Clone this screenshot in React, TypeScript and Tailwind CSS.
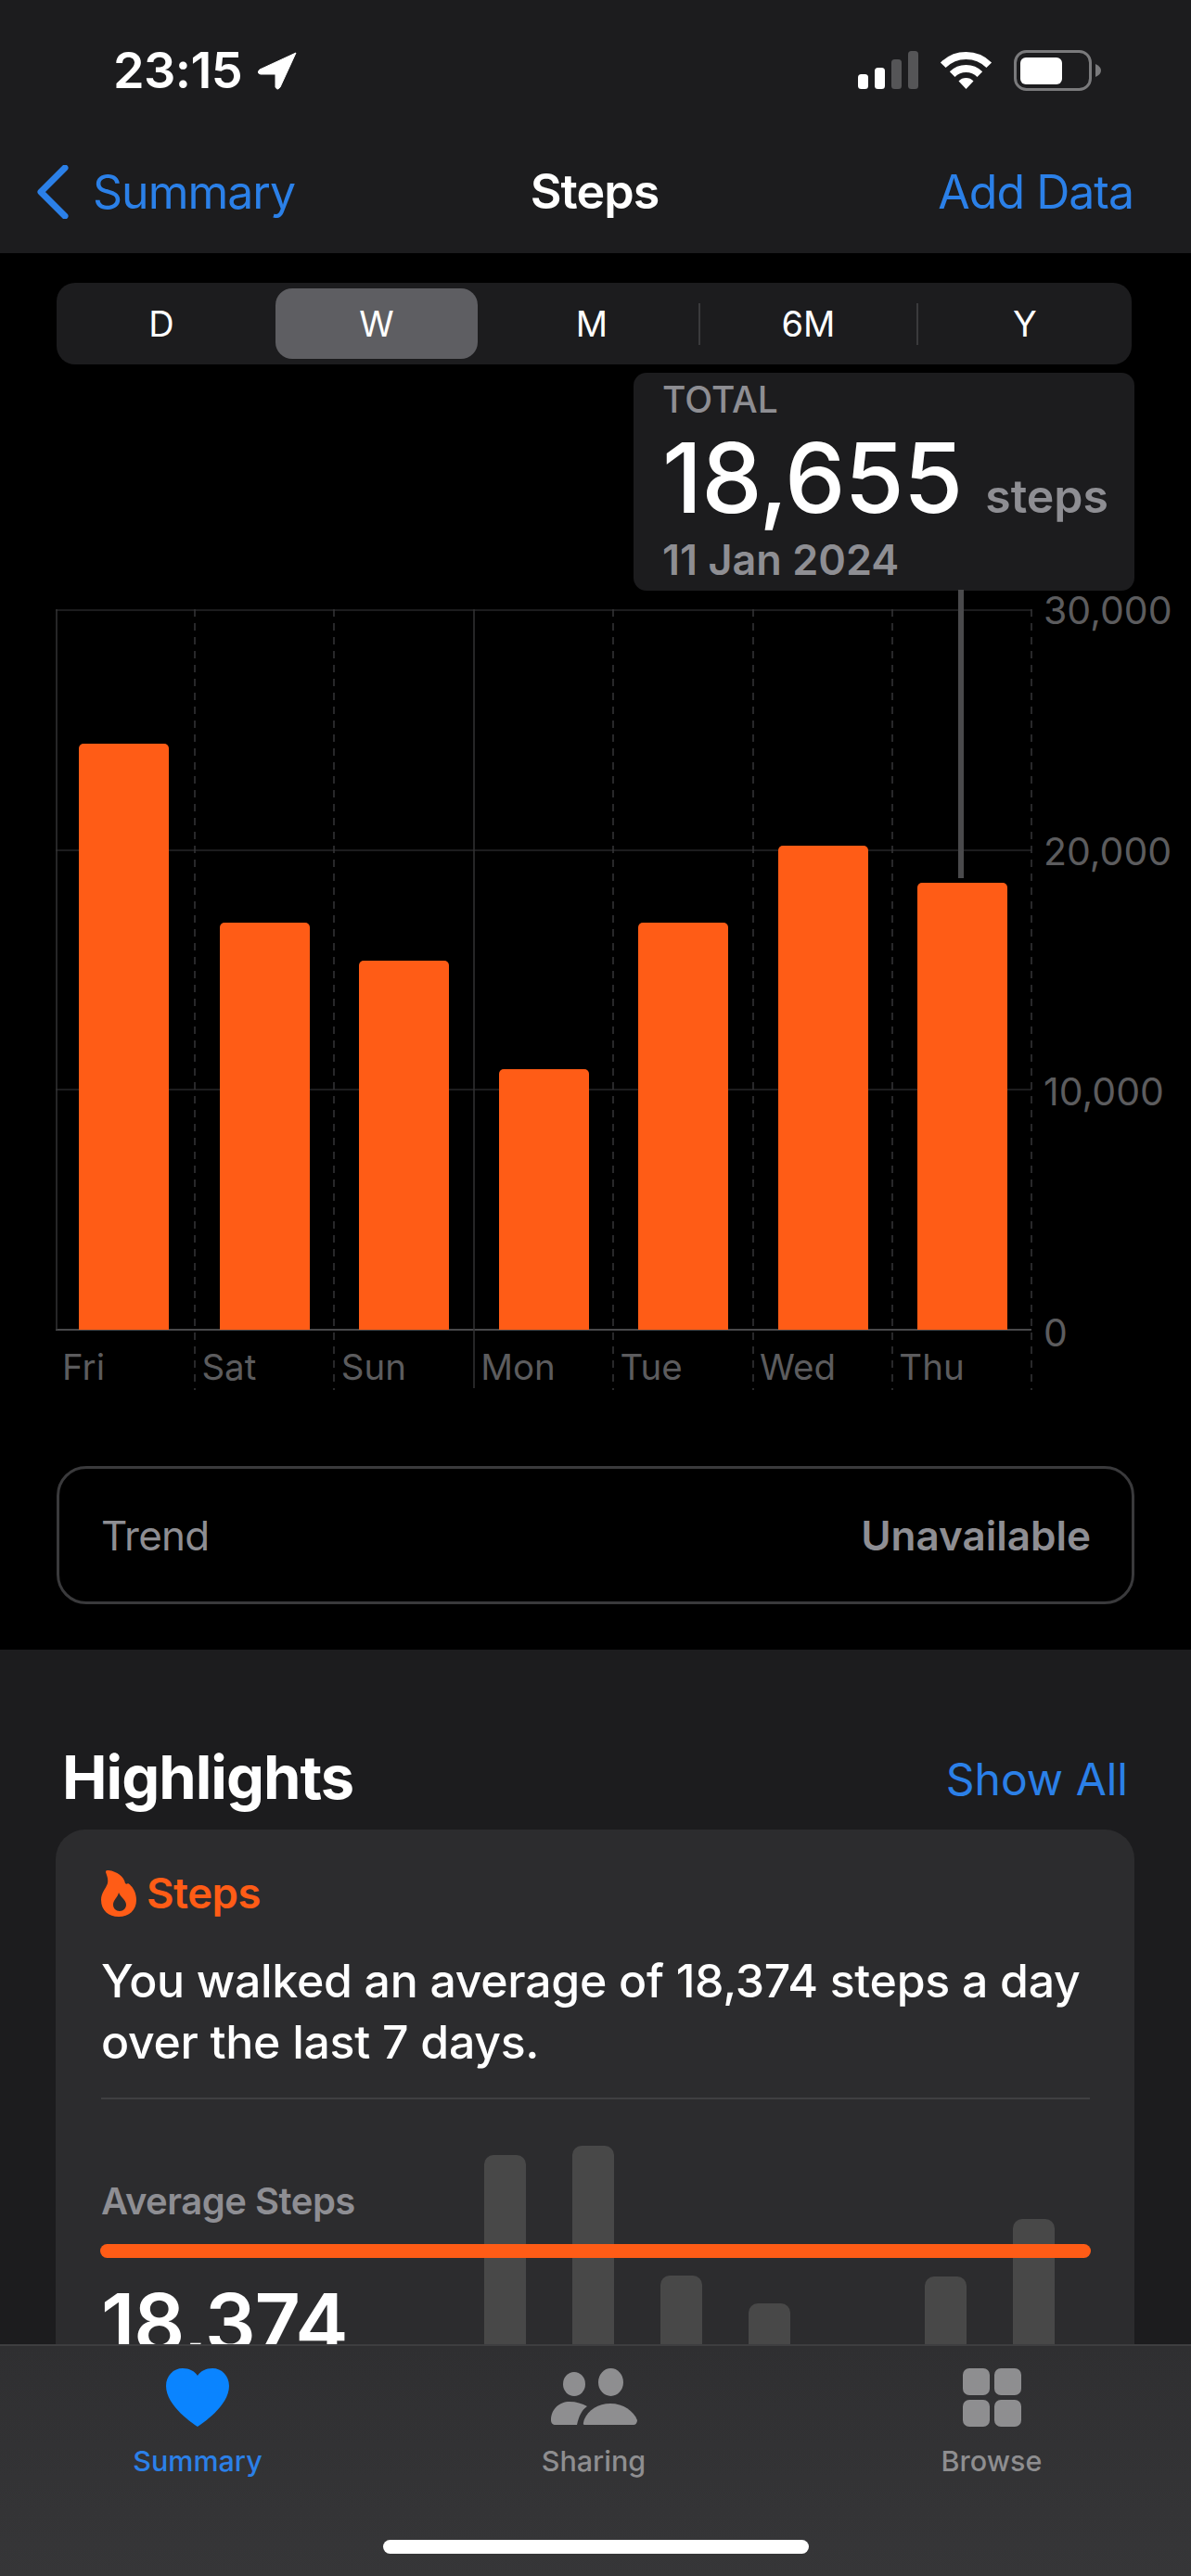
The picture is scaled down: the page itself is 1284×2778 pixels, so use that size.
import React from "react";

const days = [
  { label: "Fri", top: 802 },
  { label: "Sat", top: 995 },
  { label: "Sun", top: 1036 },
  { label: "Mon", top: 1153 },
  { label: "Tue", top: 995 },
  { label: "Wed", top: 912 },
  { label: "Thu", top: 952 },
];

const miniBars = [275, 285, 145, 115, 40, 144, 206];

const StatusIcons = () => (
  <div className="flex items-center">
    <svg width="65" height="42" viewBox="0 0 65 42" className="mr-[23px]">
      <rect x="0" y="25" width="11" height="16" rx="3.5" fill="#fff" />
      <rect x="18" y="18" width="11" height="23" rx="3.5" fill="#fff" />
      <rect x="36" y="9" width="11" height="32" rx="3.5" fill="#555557" />
      <rect x="54" y="0" width="11" height="41" rx="3.5" fill="#555557" />
    </svg>
    <svg width="57" height="42" viewBox="0 0 57 42" className="mr-[23px]" fill="none">
      <path d="M3.75 15.25A35 35 0 0 1 53.25 15.25" stroke="#fff" strokeWidth="8" />
      <path d="M13.65 25.15A21 21 0 0 1 43.35 25.15" stroke="#fff" strokeWidth="8" />
      <path d="M28.5 41L20.5 32.5A11 11 0 0 1 36.5 32.5Z" fill="#fff" />
    </svg>
    <svg width="94" height="44" viewBox="0 0 94 44">
      <rect x="1.5" y="1.5" width="81" height="41" rx="12" fill="none" stroke="#7a7a7c" strokeWidth="3" />
      <rect x="7" y="8" width="45" height="29" rx="6" fill="#fff" />
      <path d="M88 15C92 17 94 19 94 22C94 25 92 27 88 29Z" fill="#7a7a7c" />
    </svg>
  </div>
);

const ChartGrid = () => (
  <svg width="1054" height="842" viewBox="0 0 1054 842" className="absolute left-0 top-0" fill="none">
    <path d="M0 1H1052M0 260H1052M0 518H1052" stroke="#262628" strokeWidth="1.5" />
    <path d="M0 777H1052" stroke="#48484a" strokeWidth="2" />
    <path d="M1 0V777M451 0V840" stroke="#333335" strokeWidth="1.5" />
    <path
      d="M150 0V842M300 0V842M601 0V842M752 0V842M902 0V842M1052 0V842"
      stroke="#363638"
      strokeWidth="1.5"
      strokeDasharray="8 7"
    />
  </svg>
);

const FlameIcon = () => (
  <svg width="38" height="50" viewBox="0 0 38 50">
    <path
      fillRule="evenodd"
      d="M19 50C8 50 0 43 0 32C0 24 5 20 7 14C8 9 6 5 5 2C5 0 6 0 8 0C17 1 25 7 26 14C27 15 28 15 29 14C34 17 38 24 38 32C38 43 30 50 19 50ZM20 44C24 44 27 41 27 37C27 32 21 29 19 24C18 29 13 32 13 37C13 41 16 44 20 44Z"
      fill="#ff5c16"
    />
  </svg>
);

const HeartIcon = () => (
  <svg width="68" height="63" viewBox="0 0 68 63">
    <path
      d="M34 63C30 60 0 41 0 19C0 8 8 0 18 0C25 0 31 3 34 8C37 3 43 0 50 0C60 0 68 8 68 19C68 41 38 60 34 63Z"
      fill="#0a84ff"
    />
  </svg>
);

const SharingIcon = () => (
  <svg width="93" height="62" viewBox="0 0 93 62" fill="#8e8e90">
    <ellipse cx="25" cy="17" rx="12" ry="13" />
    <ellipse cx="64.5" cy="15" rx="13.5" ry="15" />
    <path d="M0 56C0 44 9 36 20 36C27 36 34 38 39 41C33 45 30 52 28 61H5C2 61 0 59 0 56Z" />
    <path d="M36 61C34 61 35 58 36 55C40 45 51 38 64 38C78 38 89 46 93 56C93 59 91 61 89 61Z" />
  </svg>
);

const BrowseIcon = () => (
  <svg width="63" height="63" viewBox="0 0 63 63" fill="#8e8e90">
    <rect x="0" y="0" width="29" height="29" rx="7" />
    <rect x="34" y="0" width="29" height="29" rx="7" />
    <rect x="0" y="34" width="29" height="29" rx="7" />
    <rect x="34" y="34" width="29" height="29" rx="7" />
  </svg>
);

export default function App() {
  return (
    <div className="flex h-[2778px] w-[1284px] flex-col overflow-hidden bg-black font-['Inter','Liberation_Sans',sans-serif] text-white">
      {/* header */}
      <header className="h-[273px] shrink-0 bg-[#1c1c1e]">
        <div className="flex h-[152px] items-center justify-between pl-[122px] pr-[97px]">
          <div className="flex items-center">
            <span className="text-[54px] font-semibold leading-[60px] tracking-[-0.6px]">23:15</span>
            <svg width="42" height="41" viewBox="0 0 42 41" className="ml-[17px]">
              <path d="M41 1L2 19Q-2 23 3 24L19 24L19 38Q21 42 24 38Z" fill="#fff" stroke="#fff" strokeLinejoin="round" />
            </svg>
          </div>
          <StatusIcons />
        </div>
        <div className="grid h-[110px] grid-cols-3 items-center pl-[40px] pr-[62px]">
          <div className="flex items-center">
            <svg width="34" height="58" viewBox="0 0 34 58" fill="none">
              <path d="M30 3L4 29L30 55" stroke="#2b80e8" strokeWidth="7" strokeLinecap="round" strokeLinejoin="round" />
            </svg>
            <span className="ml-[26px] text-[50px] leading-[60px] tracking-[-1px] text-[#2b80e8]">Summary</span>
          </div>
          <div className="ml-[20px] text-center text-[52px] font-semibold leading-[60px] tracking-[-1px]">Steps</div>
          <div className="text-right text-[50px] leading-[60px] tracking-[-1px] text-[#2b80e8]">Add Data</div>
        </div>
      </header>

      {/* chart */}
      <section className="relative shrink-0 px-[61px] pb-[49px] pt-[32px]">
        <div className="flex h-[88px] w-[1159px] items-center rounded-[20px] bg-[#1c1c1e] text-[38px] leading-[46px]">
          <div className="w-[226px] text-center">D</div>
          <div className="ml-[10px] flex h-[76px] w-[218px] items-center justify-center rounded-[18px] bg-[#5e5e62]">W</div>
          <div className="flex-1 pl-[8px] text-center">M</div>
          <div className="h-[45px] w-[2px] bg-[#3a3a3c]" />
          <div className="w-[233px] text-center">6M</div>
          <div className="h-[45px] w-[2px] bg-[#3a3a3c]" />
          <div className="w-[230px] text-center">Y</div>
        </div>

        <div className="-ml-px mt-[264px] flex items-start">
          <div className="relative w-[1052px]">
            <ChartGrid />
            <div className="relative flex h-[777px] items-end pl-[25px]">
              {days.map((d, i) => (
                <div key={d.label} className={i === 0 ? "mr-[55px] w-[97px] shrink-0" : "mr-[53.4px] w-[97px] shrink-0"}>
                  <div className="rounded-t-[5px] bg-[#ff5c16]" style={{ height: 1434 - d.top }} />
                </div>
              ))}
            </div>
            <div className="relative grid h-[63px] grid-cols-[repeat(7,150.4px)] pl-[7px] pt-[18px] text-[38.5px] leading-[44px] text-[#5c5c5e]">
              {days.map((d) => (
                <div key={d.label}>{d.label}</div>
              ))}
            </div>
          </div>
          <div className="-mt-[21px] ml-[13px] flex h-[823px] flex-col justify-between text-[41px] leading-[44px] text-[#5c5c5e]">
            <div>30,000</div>
            <div>20,000</div>
            <div>10,000</div>
            <div>0</div>
          </div>
        </div>

        {/* tooltip over the chart */}
        <div className="absolute left-[683px] top-[129px] h-[235px] w-[540px] rounded-[14px] bg-[#1c1c1e] px-[31px] pt-[7px]">
          <div className="text-[39px] font-medium leading-[44px] text-[#8e8e93]">TOTAL</div>
          <div className="flex items-baseline">
            <span className="text-[104px] font-medium leading-[124px] tracking-[-1px]">18,655</span>
            <span className="ml-[25px] text-[50px] font-semibold text-[#8e8e93]">steps</span>
          </div>
          <div className="mt-[1px] text-[45px] font-semibold leading-[52px] text-[#8e8e93]">11 Jan 2024</div>
        </div>
        <div className="absolute left-[1033px] top-[363px] h-[311px] w-[6px] bg-[#4a4a4c]" />

        <div className="mt-[84px] flex h-[149px] items-center justify-between rounded-[32px] border-[3px] border-[#3a3a3c] pl-[45px] pr-[44px] text-[44px]">
          <span className="tracking-[-0.8px] text-[#8e8e93]">Trend</span>
          <span className="font-semibold text-[#8e8e93]">Unavailable</span>
        </div>
      </section>

      {/* highlights */}
      <section className="min-h-0 flex-1 overflow-hidden bg-[#1c1c1e] pl-[60px] pr-[61px]">
        <div className="flex h-[194px] items-center justify-between pl-[7px] pr-[7px] pt-[81px]">
          <h2 className="text-[65px] font-bold leading-[74px] tracking-[-1px]">Highlights</h2>
          <span className="pt-[4px] text-[48px] leading-[58px] text-[#2b80e8]">Show All</span>
        </div>
        <div className="rounded-[32px] bg-[#2c2c2e] pl-[49px] pr-[48px] pt-[44px]">
          <div className="flex items-center">
            <FlameIcon />
            <span className="ml-[11px] text-[45.5px] font-semibold leading-[50px] tracking-[-0.5px] text-[#ff5c16]">Steps</span>
          </div>
          <p className="mt-[36px] text-[50px] font-medium leading-[66px] tracking-[-0.3px]">
            You walked an average of 18,374 steps a day
            <br />
            over the last 7 days.
          </p>
          <div className="mt-[27px] h-[2px] bg-[#3f3f41]" />
          <div className="relative flex h-[335px] items-end">
            <div className="w-[413px] self-start pt-[87px]">
              <div className="text-[40px] font-semibold leading-[46px] tracking-[-0.5px] text-[#8e8e93]">Average Steps</div>
              <div className="mt-[58px] text-[86px] font-semibold leading-[100px] tracking-[-1px]">18,374</div>
            </div>
            <div className="flex items-end gap-[50px]">
              {miniBars.map((h, i) => (
                <div key={i} className="w-[45px] rounded-t-[10px] bg-[#484848]" style={{ height: h }} />
              ))}
            </div>
            <div className="absolute -left-px -right-px top-[156px] h-[15px] rounded-full bg-[#ff5c16]" />
          </div>
        </div>
      </section>

      {/* tab bar */}
      <nav className="relative h-[250px] shrink-0 border-t-2 border-[#3e3e40] bg-linear-to-b from-[#2f2f31] to-[#363638]">
        <div className="flex pt-[24px] text-[30.5px] font-medium leading-[36px] text-[#8e8e90]">
          <div className="flex w-[426px] flex-col items-center">
            <HeartIcon />
            <span className="mt-[19px] text-[#2b80e8]">Summary</span>
          </div>
          <div className="flex w-[428px] flex-col items-center">
            <SharingIcon />
            <span className="mt-[20px]">Sharing</span>
          </div>
          <div className="flex w-[430px] flex-col items-center">
            <BrowseIcon />
            <span className="mt-[19px]">Browse</span>
          </div>
        </div>
        <div className="absolute bottom-[24px] left-[413px] h-[15px] w-[459px] rounded-full bg-white" />
      </nav>
    </div>
  );
}
